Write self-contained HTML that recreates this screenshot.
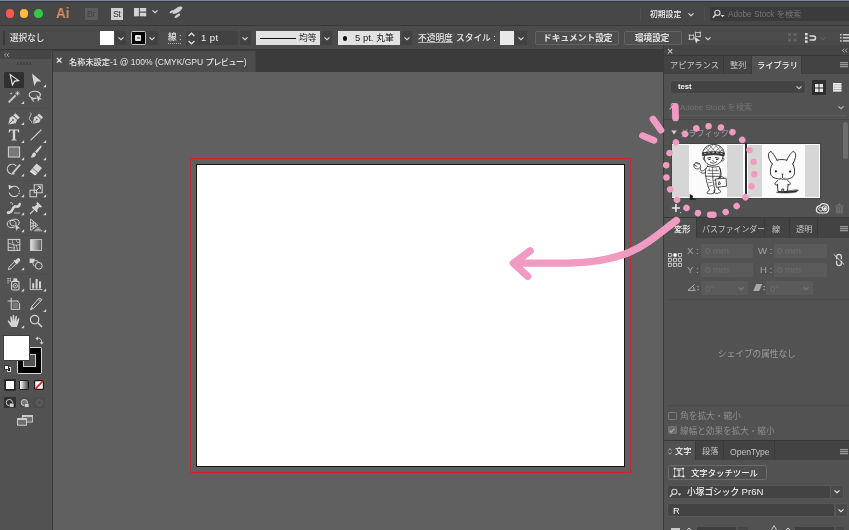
<!DOCTYPE html>
<html lang="ja"><head><meta charset="utf-8"><title>Illustrator</title>
<style>
*{box-sizing:border-box;margin:0;padding:0}
html,body{width:849px;height:530px;overflow:hidden;background:#606060}
body{position:relative;font-family:"Liberation Sans","Noto Sans CJK JP",sans-serif;font-size:8.4px;color:#e6e6e6;line-height:12px}
.a{position:absolute}
.t{position:absolute;white-space:nowrap;height:12px;line-height:12px;will-change:transform}
svg{position:absolute;overflow:visible}
#topstrip{left:0;top:0;width:849px;height:2.4px;background:linear-gradient(#8288aa 0,#7b80a0 1.2px,#353535 1.3px,#353535 2.4px)}
#appbar{left:0;top:1px;width:849px;height:25px;background:#474747}
#ctrl{left:0;top:24.6px;width:849px;height:25.4px;background:#4b4b4b;border-top:1.6px solid #393939}
#tabbar{left:51px;top:49.4px;width:613px;height:22.2px;background:#3b3b3b;border-top:1px solid #383838}
#doctab{left:52.4px;top:50.6px;width:203.2px;height:21px;background:#4c4c4c;border-right:1px solid #444}
#tools{left:0;top:49.4px;width:52.5px;height:481px;background:#525252;border-right:1.5px solid #3a3a3a;border-top:1px solid #383838}
#toolhead{left:0;top:50px;width:51px;height:9px;background:#454545}
#rp{left:663px;top:45px;width:186px;height:485px;background:#525252;border-left:1px solid #3a3a3a}
.dark{background:#3e3e3e}
.cbox{position:absolute;background:#424242;top:31.4px;height:13.2px}
.ptabs{position:absolute;left:664px;width:185px;background:#434343;border-top:1px solid #383838}
.ptab{position:absolute;top:0;height:100%;border-right:1px solid #3a3a3a}
.ptab.on{background:#525252}
.dim{color:#9a9a9a}
.fld{position:absolute;background:#5a5a5a;border-radius:1px}
</style></head><body>
<div class="a" id="appbar"></div>
<div class="a" id="topstrip"></div>
<div class="a" id="ctrl"></div>
<div class="a" id="tabbar"></div>
<div class="a" id="doctab"></div>

<!-- ===== application bar ===== -->
<div class="a" style="left:5.5px;top:9.4px;width:8.6px;height:8.6px;border-radius:50%;background:#fc5753"></div>
<div class="a" style="left:19.8px;top:9.4px;width:8.6px;height:8.6px;border-radius:50%;background:#fdbc40"></div>
<div class="a" style="left:34.4px;top:9.4px;width:8.6px;height:8.6px;border-radius:50%;background:#33c748"></div>
<div class="t" id="ai" style="left:55.6px;top:4.2px;font-size:14.4px;height:18px;line-height:18px;color:#d98e5f;font-weight:bold;transform:scaleX(0.93);transform-origin:0 0">Ai</div>
<div class="a" style="left:85px;top:8px;width:12.5px;height:12px;background:#5c5c5c"></div>
<div class="t" style="left:87px;top:8.2px;font-size:8.8px;color:#454545;letter-spacing:-0.4px">Br</div>
<div class="a" style="left:110.7px;top:8px;width:12.5px;height:12px;background:#cfcfcf"></div>
<div class="t" style="left:113.2px;top:8.2px;font-size:8.8px;color:#2c2c2c;letter-spacing:-0.5px">St</div>
<svg style="left:133.5px;top:7.7px" width="12.7" height="8.8" viewBox="0 0 13 9"><rect x="0" y="0" width="5" height="8.5" fill="#d4d4d4"/><rect x="6" y="0" width="6.5" height="3.6" fill="#d4d4d4"/><rect x="6" y="4.8" width="6.5" height="3.7" fill="#d4d4d4"/></svg>
<svg style="left:151.9px;top:10.4px" width="6" height="3.4" viewBox="0 0 7 4"><path d="M0.5 0.5 L3.5 3.2 L6.5 0.5" fill="none" stroke="#ddd" stroke-width="1.3"/></svg>
<svg style="left:0;top:0" width="200" height="26" viewBox="0 0 200 26"><g fill="#cfcfcf"><ellipse cx="177.4" cy="10.2" rx="5.8" ry="2.3" transform="rotate(-33 177.4 10.2)"/><ellipse cx="177.4" cy="15.8" rx="3.3" ry="1.25" transform="rotate(-35 177.4 15.8)"/><ellipse cx="171.6" cy="11.6" rx="2.4" ry="0.95" transform="rotate(-35 171.6 11.6)"/></g></svg>
<div class="a" style="left:640.3px;top:6.6px;width:1px;height:14px;background:#4f4f4f"></div>
<div class="t" id="shoki" style="left:650px;top:8.8px;font-size:7.8px;font-weight:500;color:#f0f0f0">初期設定</div>
<svg style="left:687.8px;top:12.6px" width="6" height="3.4" viewBox="0 0 7 4"><path d="M0.5 0.5 L3.5 3.2 L6.5 0.5" fill="none" stroke="#ddd" stroke-width="1.3"/></svg>
<div class="a" style="left:704.4px;top:6.6px;width:1px;height:14px;background:#4f4f4f"></div>
<div class="a" style="left:709.9px;top:7.2px;width:140px;height:13.5px;background:#3b3b3b;border-radius:2px 0 0 2px"></div>
<svg style="left:711.6px;top:8.8px" width="13" height="10" viewBox="0 0 13 10"><circle cx="5.4" cy="3.8" r="2.6" fill="none" stroke="#d4d4d4" stroke-width="1.15"/><path d="M3.5 5.8 L0.9 8.7" stroke="#d4d4d4" stroke-width="1.4"/><path d="M8.6 6 L12.6 6 L10.6 8.2Z" fill="#d4d4d4"/></svg>
<div class="t" id="stock1" style="left:728px;top:8.6px;font-size:8.2px;color:#757575">Adobe Stock を検索</div>

<!-- ===== control bar ===== -->
<div class="a" style="left:3px;top:31px;width:2px;height:14px;background:#3a3a3a"></div>
<div class="t" id="sentaku" style="left:9.8px;top:32px;font-size:8.6px;font-weight:500">選択なし</div>
<div class="a" style="left:100px;top:31px;width:14px;height:14px;background:#fff"></div>
<div class="cbox" style="left:115px;width:11px"></div>
<svg style="left:117.7px;top:36.6px" width="6" height="3.4" viewBox="0 0 7 4"><path d="M0.5 0.5 L3.5 3.2 L6.5 0.5" fill="none" stroke="#ddd" stroke-width="1.3"/></svg>
<div class="a" style="left:131px;top:31.2px;width:14.8px;height:13.8px;background:#000;border:1.2px solid #c4c4c4;border-radius:1.5px"></div>
<div class="a" style="left:135.3px;top:35.4px;width:6.2px;height:5.6px;background:#e6e6e6;border-radius:1px"></div>
<div class="a" style="left:137px;top:36.9px;width:2.8px;height:2.6px;background:#8a8a8a"></div>
<div class="cbox" style="left:146.4px;width:11.6px"></div>
<svg style="left:149.2px;top:36.6px" width="6" height="3.4" viewBox="0 0 7 4"><path d="M0.5 0.5 L3.5 3.2 L6.5 0.5" fill="none" stroke="#ddd" stroke-width="1.3"/></svg>
<div class="t" id="sen" style="left:168px;top:32.4px;font-size:8.7px;font-weight:500;border-bottom:1px dotted #aaa;height:12px;line-height:11px">線<span style="margin-left:2.2px">:</span></div>
<div class="cbox" style="left:185.8px;width:11.4px"></div>
<svg style="left:188px;top:32px" width="7" height="12" viewBox="0 0 7 12"><path d="M0.6 4 L3.5 1.2 L6.4 4 M0.6 9 L3.5 11.8 L6.4 9" fill="none" stroke="#ddd" stroke-width="1.3"/></svg>
<div class="cbox" style="left:198.4px;width:40px"></div>
<div class="t" id="pt1" style="left:201px;top:32.4px;font-size:9.6px;letter-spacing:0.35px;color:#f4f4f4">1 pt</div>
<div class="cbox" style="left:239.6px;width:11.2px"></div>
<svg style="left:241.5px;top:36.6px" width="6" height="3.4" viewBox="0 0 7 4"><path d="M0.5 0.5 L3.5 3.2 L6.5 0.5" fill="none" stroke="#ddd" stroke-width="1.3"/></svg>
<div class="a" style="left:256.2px;top:31.4px;width:63.8px;height:13.4px;background:#e2e2e2"></div>
<div class="a" style="left:260px;top:37.7px;width:36px;height:1.7px;background:#111"></div>
<div class="t" id="kinto" style="left:299.3px;top:32.4px;font-size:8.8px;color:#222">均等</div>
<div class="cbox" style="left:321.5px;width:10.5px"></div>
<svg style="left:324.0px;top:36.6px" width="6" height="3.4" viewBox="0 0 7 4"><path d="M0.5 0.5 L3.5 3.2 L6.5 0.5" fill="none" stroke="#ddd" stroke-width="1.3"/></svg>
<div class="a" style="left:338px;top:31.4px;width:61.5px;height:13.4px;background:#e2e2e2"></div>
<div class="a" style="left:342.8px;top:36.3px;width:4.4px;height:4.4px;border-radius:50%;background:#111"></div>
<div class="t" id="maru" style="left:355.2px;top:32.4px;font-size:8.8px;color:#222"><span style="font-size:9.5px">5 pt. </span>丸筆</div>
<div class="cbox" style="left:401.5px;width:10.5px"></div>
<svg style="left:404.0px;top:36.6px" width="6" height="3.4" viewBox="0 0 7 4"><path d="M0.5 0.5 L3.5 3.2 L6.5 0.5" fill="none" stroke="#ddd" stroke-width="1.3"/></svg>
<div class="t" id="futo" style="left:417.5px;top:32.6px;font-size:8.7px;font-weight:500;border-bottom:1px solid #a8a8a8;height:10.4px;line-height:11px">不透明度</div>
<div class="t" id="style" style="left:456px;top:32.4px;font-size:8.7px;font-weight:500">スタイル :</div>
<div class="a" style="left:500px;top:31px;width:13.5px;height:14px;background:#e9e9e9"></div>
<div class="cbox" style="left:514.5px;width:12px"></div>
<svg style="left:517.7px;top:36.6px" width="6" height="3.4" viewBox="0 0 7 4"><path d="M0.5 0.5 L3.5 3.2 L6.5 0.5" fill="none" stroke="#ddd" stroke-width="1.3"/></svg>
<div class="a" style="left:535px;top:30.5px;width:84px;height:14.5px;border:1px solid #636363;border-radius:2px;background:#4e4e4e"></div>
<div class="t" id="docset" style="left:543px;top:32px;font-size:8.7px;font-weight:bold">ドキュメント設定</div>
<div class="a" style="left:623.5px;top:30.5px;width:58.5px;height:14.5px;border:1px solid #636363;border-radius:2px;background:#4e4e4e"></div>
<div class="t" id="kankyo" style="left:634.8px;top:32px;font-size:8.6px;font-weight:bold">環境設定</div>
<svg style="left:688px;top:30px" width="16" height="16" viewBox="688 30 16 16"><g fill="none" stroke="#d0d0d0" stroke-width="0.8"><rect x="689.4" y="35.2" width="4" height="4"/><rect x="695.6" y="32.4" width="4.6" height="4"/></g><g fill="#d0d0d0"><rect x="688.7" y="34.5" width="1.4" height="1.4"/><rect x="692.7" y="34.5" width="1.4" height="1.4"/><rect x="688.7" y="38.5" width="1.4" height="1.4"/><rect x="694.9" y="31.7" width="1.4" height="1.4"/><rect x="699.5" y="31.7" width="1.4" height="1.4"/><rect x="699.5" y="35.7" width="1.4" height="1.4"/></g><path d="M693.6 36 L700.6 40.8 L697.4 41.2 L696.2 44Z" fill="#e4e4e4" stroke="#484848" stroke-width="0.4"/></svg>
<svg style="left:705.2px;top:36.6px" width="6" height="3.4" viewBox="0 0 7 4"><path d="M0.5 0.5 L3.5 3.2 L6.5 0.5" fill="none" stroke="#ddd" stroke-width="1.3"/></svg>
<svg style="left:788px;top:33px" width="9" height="10" viewBox="0 0 9 10"><g fill="#626262"><rect x="0" y="0" width="3" height="3"/><rect x="5.5" y="0" width="3" height="3"/><rect x="0" y="5.5" width="3" height="3"/><rect x="5.5" y="5.5" width="3" height="3"/></g></svg>
<svg style="left:804.5px;top:32.8px" width="12" height="10" viewBox="0 0 12 10"><g fill="#dcdcdc"><rect x="0" y="0" width="2.6" height="2.4"/><rect x="0" y="3.7" width="2.6" height="2.4"/><rect x="0" y="7.4" width="2.6" height="2.4"/></g><path d="M4.6 2.9 H8.4 A2.1 2.1 0 0 1 8.4 7.1 H4.6" fill="none" stroke="#dcdcdc" stroke-width="1.5"/></svg>
<svg style="left:820.2px;top:36.6px" width="6" height="3.4" viewBox="0 0 7 4"><path d="M0.5 0.5 L3.5 3.2 L6.5 0.5" fill="none" stroke="#6a6a6a" stroke-width="1.1"/></svg>
<svg style="left:840px;top:34px" width="9" height="7.6" viewBox="0 0 9 8.4" preserveAspectRatio="none"><g fill="#d0d0d0"><rect x="0" y="0" width="1.6" height="1.6"/><rect x="0" y="3.4" width="1.6" height="1.6"/><rect x="0" y="6.8" width="1.6" height="1.6"/><rect x="2.8" y="0" width="6.2" height="1.6"/><rect x="2.8" y="3.4" width="6.2" height="1.6"/><rect x="2.8" y="6.8" width="6.2" height="1.6"/></g></svg>

<!-- ===== document tab ===== -->
<div class="t" id="tabx" style="left:56.2px;top:54.2px;font-size:10.8px;color:#e8e8e8;font-weight:bold">×</div>
<div class="t" id="tabt" style="left:68.8px;top:55.5px;font-size:8.2px;font-weight:500">名称未設定<span style="font-size:8.5px;font-weight:400">-1 @ 100% (CMYK/GPU </span><span style="letter-spacing:-0.55px">プレビュー</span><span style="font-size:8.5px">)</span></div>

<!-- ===== canvas ===== -->
<div class="a" style="left:190px;top:158px;width:440.7px;height:314.8px;border:1.5px solid #cb2630"></div>
<div class="a" style="left:196px;top:164px;width:428.6px;height:302.6px;background:#fff;border:1.2px solid #161616"></div>

<!--TOOLS_START-->
<div class="a" id="tools"></div>
<div class="a" id="toolhead"></div>
<svg style="left:4.2px;top:52.6px" width="5.6" height="4" viewBox="0 0 7 5"><path d="M2.8 0.3 L0.6 2.5 L2.8 4.7 M6 0.3 L3.8 2.5 L6 4.7" fill="none" stroke="#ccc" stroke-width="0.9"/></svg>
<div class="a" style="left:17px;top:62px;width:15px;height:3px;background:repeating-linear-gradient(90deg,#424242 0 2px,#525252 2px 3px)"></div>
<div class="a" style="left:4px;top:107.8px;width:43px;height:1px;background:#4e4e4e"></div>
<div class="a" style="left:4px;top:180.3px;width:43px;height:1px;background:#4e4e4e"></div>
<div class="a" style="left:4px;top:234.6px;width:43px;height:1px;background:#4e4e4e"></div>
<div class="a" style="left:4px;top:273.5px;width:43px;height:1px;background:#4e4e4e"></div>
<div class="a" style="left:4px;top:293.7px;width:43px;height:1px;background:#4e4e4e"></div>
<div class="a" style="left:4px;top:71.5px;width:20px;height:16px;background:#2f2f2f;border-radius:1.5px"></div>
<svg style="left:5.800000000000001px;top:71.5px" width="16" height="16" viewBox="0 0 16 16"><path d="M4.2 2.6 L12.6 8.6 L8.6 9.1 L6.4 12.9Z" fill="none" stroke="#e8e8e8" stroke-width="1.1" stroke-linejoin="miter"/></svg>
<svg style="left:27.6px;top:71.5px" width="16" height="16" viewBox="0 0 16 16"><path d="M4 1.4 L13.4 9.4 L8.8 9.6 L6.2 14Z" fill="#d4d4d4"/><path d="M18.10 12.20 V15.20 H15.10Z" fill="#d6d6d6"/></svg>
<svg style="left:5.800000000000001px;top:89px" width="16" height="16" viewBox="0 0 16 16"><path d="M2.6 13.4 L9.6 6.4" stroke="#d4d4d4" stroke-width="1.7"/><path d="M11.5 2 V6.6 M9.2 4.3 H13.8 M9.9 2.7 L13.1 5.9 M13.1 2.7 L9.9 5.9" stroke="#d4d4d4" stroke-width="0.7"/><path d="M5.2 3.4 V5.6 M4.1 4.5 H6.3" stroke="#d4d4d4" stroke-width="0.6"/><path d="M18.10 12.10 V15.10 H15.10Z" fill="#d6d6d6"/></svg>
<svg style="left:27.6px;top:89px" width="16" height="16" viewBox="0 0 16 16"><ellipse cx="6.8" cy="5.8" rx="5.6" ry="3.6" fill="none" stroke="#d4d4d4" stroke-width="1.1"/><path d="M4.4 8.6 C2.6 9.6 3.6 11.4 5.2 11 C6.4 10.6 5.6 9 4.6 9.4 C4 10.2 4.8 12.4 6.2 13" fill="none" stroke="#d4d4d4" stroke-width="0.9"/><path d="M8.2 5.4 L14.6 10.4 L11.6 10.6 L10 13.4Z" fill="#d4d4d4" stroke="#525252" stroke-width="0.5"/></svg>
<svg style="left:5.800000000000001px;top:111px" width="16" height="16" viewBox="0 0 16 16"><path d="M9.4 2.2 L13.8 6.6 L11.8 8.6 L7.4 4.2Z" fill="#d4d4d4"/><path d="M6.9 4.9 L11.1 9.1 L9.6 12.2 L2.4 13.6 L3.8 6.4Z" fill="#d4d4d4"/><path d="M2.8 13.2 L6.6 9.4" stroke="#525252" stroke-width="0.8"/><circle cx="7" cy="9" r="0.9" fill="#525252"/><path d="M18.10 10.90 V13.90 H15.10Z" fill="#d6d6d6"/></svg>
<svg style="left:27.6px;top:111px" width="16" height="16" viewBox="0 0 16 16"><g transform="translate(2.6,0.4) scale(0.9)"><path d="M9.4 2.2 L13.8 6.6 L11.8 8.6 L7.4 4.2Z" fill="#d4d4d4"/><path d="M6.9 4.9 L11.1 9.1 L9.6 12.2 L2.4 13.6 L3.8 6.4Z" fill="#d4d4d4"/><path d="M2.8 13.2 L6.6 9.4" stroke="#525252" stroke-width="0.8"/><circle cx="7" cy="9" r="0.9" fill="#525252"/></g><path d="M2.4 1.6 C4.6 3 0.6 6.2 1.6 8.4 C2.4 10.2 4 9.4 3.6 11.6" fill="none" stroke="#d4d4d4" stroke-width="0.9"/></svg>
<svg style="left:5.800000000000001px;top:126.69999999999999px" width="16" height="16" viewBox="0 0 16 16"><path d="M2.8 2.4 H13.2 V5.4 H12.2 C12 4 11.6 3.6 10.4 3.6 H9.2 V12 C9.2 12.6 9.6 12.8 10.6 12.8 V13.6 H5.4 V12.8 C6.4 12.8 6.8 12.6 6.8 12 V3.6 H5.6 C4.4 3.6 4 4 3.8 5.4 H2.8Z" fill="#d4d4d4"/><path d="M18.10 12.90 V15.90 H15.10Z" fill="#d6d6d6"/></svg>
<svg style="left:27.6px;top:126.69999999999999px" width="16" height="16" viewBox="0 0 16 16"><path d="M2.6 13.4 L13.4 2.6" stroke="#d4d4d4" stroke-width="1.2"/><path d="M18.10 12.90 V15.90 H15.10Z" fill="#d6d6d6"/></svg>
<svg style="left:5.800000000000001px;top:143.8px" width="16" height="16" viewBox="0 0 16 16"><rect x="2.4" y="3" width="11.2" height="10" fill="#777" stroke="#d4d4d4" stroke-width="1"/><path d="M18.10 13.20 V16.20 H15.10Z" fill="#d6d6d6"/></svg>
<svg style="left:27.6px;top:143.8px" width="16" height="16" viewBox="0 0 16 16"><path d="M13.4 1.6 C14 2.2 13.6 3 13 3.8 L8.8 9.2 L7 7.6 L12 2.2 C12.6 1.6 13 1.2 13.4 1.6Z" fill="#d4d4d4"/><path d="M6.4 8.2 L8.2 9.9 C8 12 6 13.6 2.4 13.6 C4 12.4 3.6 9.2 6.4 8.2Z" fill="#d4d4d4"/><path d="M18.10 13.20 V16.20 H15.10Z" fill="#d6d6d6"/></svg>
<svg style="left:5.800000000000001px;top:161.4px" width="16" height="16" viewBox="0 0 16 16"><path d="M8.6 12.4 A4.9 4.9 0 1 1 10.2 5.2" fill="none" stroke="#d4d4d4" stroke-width="1.1"/><path d="M13.6 3 L14.8 4.2 L7.6 12.6 L5.6 13.4 L6.2 11.4Z" fill="#d4d4d4"/><path d="M18.10 12.50 V15.50 H15.10Z" fill="#d6d6d6"/></svg>
<svg style="left:27.6px;top:161.4px" width="16" height="16" viewBox="0 0 16 16"><path d="M8.6 2.6 L14 7 L8.4 13.4 L3 9Z" fill="#d4d4d4"/><path d="M3 9 L8.4 13.4 L7 14.6 L1.8 10.4Z" fill="#eee"/><path d="M4.6 7.4 L10 11.8" stroke="#525252" stroke-width="0.7"/><path d="M18.10 12.50 V15.50 H15.10Z" fill="#d6d6d6"/></svg>
<svg style="left:5.800000000000001px;top:183.3px" width="16" height="16" viewBox="0 0 16 16"><path d="M5.2 4.2 A5.2 5.2 0 1 1 3.2 9.6" fill="none" stroke="#d4d4d4" stroke-width="1.1" stroke-dasharray="9 1.2 1.2 1.2 1.2 1.2 20"/><path d="M2.6 1.8 L7 3.8 L3 6.4Z" fill="#d4d4d4"/><path d="M18.10 11.30 V14.30 H15.10Z" fill="#d6d6d6"/></svg>
<svg style="left:27.6px;top:183.3px" width="16" height="16" viewBox="0 0 16 16"><rect x="6.2" y="1.8" width="8" height="8" fill="none" stroke="#d4d4d4" stroke-width="1"/><rect x="2" y="7.2" width="6.6" height="6.6" fill="none" stroke="#d4d4d4" stroke-width="1"/><path d="M8.4 7.6 L12.2 3.8 M9.8 3.6 H12.4 V6.2" fill="none" stroke="#d4d4d4" stroke-width="1"/><path d="M18.10 11.30 V14.30 H15.10Z" fill="#d6d6d6"/></svg>
<svg style="left:5.800000000000001px;top:199.7px" width="16" height="16" viewBox="0 0 16 16"><path d="M2 12.6 C4 12.8 5.6 11.6 6.4 9.6 C7.2 7.4 8.6 6.2 10.4 6.6 C12.4 7 13.4 5.6 13.8 4" fill="none" stroke="#d4d4d4" stroke-width="2.6" stroke-linecap="round"/><path d="M4 3.2 C5.6 1.6 7.6 3.4 6 5 M3 14 L9 5" fill="none" stroke="#d4d4d4" stroke-width="0.9"/><path d="M8 13 L14 13" stroke="#d4d4d4" stroke-width="0.8"/><path d="M18.10 12.20 V15.20 H15.10Z" fill="#d6d6d6"/></svg>
<svg style="left:27.6px;top:199.7px" width="16" height="16" viewBox="0 0 16 16"><path d="M9.2 1.8 L14.2 6.8 L12.6 7.6 L11.4 7 L9.4 9.6 L9.6 11.6 L8.6 12.2 L3.8 7.4 L4.4 6.4 L6.4 6.6 L9 4.6 L8.4 3.4Z" fill="#d4d4d4"/><path d="M5.8 10.2 L2 14" stroke="#d4d4d4" stroke-width="1.1"/><path d="M18.10 12.20 V15.20 H15.10Z" fill="#d6d6d6"/></svg>
<svg style="left:5.800000000000001px;top:216.7px" width="16" height="16" viewBox="0 0 16 16"><ellipse cx="5.6" cy="7" rx="4.4" ry="3.6" fill="none" stroke="#d4d4d4" stroke-width="1"/><ellipse cx="8.6" cy="5.6" rx="4.6" ry="3.4" fill="none" stroke="#d4d4d4" stroke-width="1"/><path d="M8.6 6.6 L14.8 11.6 L11.8 11.8 L10.2 14.6Z" fill="#d4d4d4" stroke="#525252" stroke-width="0.5"/><path d="M18.10 12.20 V15.20 H15.10Z" fill="#d6d6d6"/></svg>
<svg style="left:27.6px;top:216.7px" width="16" height="16" viewBox="0 0 16 16"><path d="M2.6 2 V13.6 L9.8 8.2Z M2.6 5.8 L6.4 6.6 M2.6 9.6 L7.6 8.2 M5.2 3.9 V11.6 M7.6 5.8 V9.9" fill="none" stroke="#d4d4d4" stroke-width="0.9"/><path d="M8.6 11 H11.6 M7.4 12.4 H12.8 M6 13.8 H14.2" stroke="#d4d4d4" stroke-width="0.8"/><path d="M18.10 12.20 V15.20 H15.10Z" fill="#d6d6d6"/></svg>
<svg style="left:5.800000000000001px;top:236.6px" width="16" height="16" viewBox="0 0 16 16"><rect x="2.2" y="2.4" width="11.6" height="11" fill="none" stroke="#d4d4d4" stroke-width="1"/><path d="M2.2 7 C5 5.6 7 9.6 13.8 7.6 M6.6 2.4 C5.4 6 9.6 9 7.8 13.4 M2.2 10.6 C5 9.6 7 12 9 10.6 M10.6 2.4 C9.6 5 12 6.4 13.8 4.6 M10.4 8 C10 10 12 11.6 11 13.4" fill="none" stroke="#d4d4d4" stroke-width="0.8"/></svg>
<svg style="left:27.6px;top:236.6px" width="16" height="16" viewBox="0 0 16 16"><defs><linearGradient id="gr1" x1="0" x2="1" y1="0" y2="0"><stop offset="0" stop-color="#e6e6e6"/><stop offset="1" stop-color="#555"/></linearGradient></defs><rect x="2.4" y="2.6" width="11.2" height="10.8" fill="url(#gr1)" stroke="#cfcfcf" stroke-width="0.9"/></svg>
<svg style="left:5.800000000000001px;top:255.60000000000002px" width="16" height="16" viewBox="0 0 16 16"><path d="M2.4 13.6 L3 11.2 L8.6 5.6 L10.4 7.4 L4.8 13Z" fill="none" stroke="#d4d4d4" stroke-width="1"/><path d="M8 4.4 L11.6 8 M9.4 5.4 L11.6 3.2 C12.6 2.2 14.2 3.6 13.2 4.8 L10.8 7" stroke="#d4d4d4" stroke-width="1.5" fill="#d4d4d4"/><path d="M18.10 11.20 V14.20 H15.10Z" fill="#d6d6d6"/></svg>
<svg style="left:27.6px;top:255.60000000000002px" width="16" height="16" viewBox="0 0 16 16"><rect x="1.6" y="2.6" width="5" height="4.4" fill="#d4d4d4"/><circle cx="7.8" cy="7.4" r="2.9" fill="#525252" stroke="#d4d4d4" stroke-width="0.9"/><circle cx="10.8" cy="9.8" r="3.4" fill="#525252" stroke="#d4d4d4" stroke-width="1"/></svg>
<svg style="left:5.800000000000001px;top:275.5px" width="16" height="16" viewBox="0 0 16 16"><rect x="5.6" y="5.4" width="7.4" height="8.6" rx="1.2" fill="none" stroke="#d4d4d4" stroke-width="1.1"/><rect x="7.4" y="2.4" width="3.8" height="3" fill="#d4d4d4"/><circle cx="9.3" cy="9.8" r="2.2" fill="none" stroke="#d4d4d4" stroke-width="0.9"/><circle cx="9.3" cy="9.8" r="0.8" fill="#d4d4d4"/><path d="M1.4 2.6 h1.3 M3.6 2.6 h1.3 M1.4 4.8 h1.3 M3.6 4.8 h1.3 M1.4 7 h1.3" stroke="#d4d4d4" stroke-width="1.2"/><path d="M18.10 12.50 V15.50 H15.10Z" fill="#d6d6d6"/></svg>
<svg style="left:27.6px;top:275.5px" width="16" height="16" viewBox="0 0 16 16"><path d="M2.2 2 V13.6 H14.4" fill="none" stroke="#d4d4d4" stroke-width="0.9"/><rect x="4.2" y="7.2" width="2" height="5.4" fill="#d4d4d4"/><rect x="7.6" y="3" width="2" height="9.6" fill="#d4d4d4"/><rect x="11" y="5.4" width="2" height="7.2" fill="#d4d4d4"/><path d="M18.10 12.50 V15.50 H15.10Z" fill="#d6d6d6"/></svg>
<svg style="left:5.800000000000001px;top:296px" width="16" height="16" viewBox="0 0 16 16"><path d="M5.2 1.6 V5 M1.6 5 H12.4 M5.2 5 V13.4 H13.6 V7.4 L11.2 5" fill="none" stroke="#d4d4d4" stroke-width="1"/><rect x="6.4" y="6.4" width="6" height="6" fill="#777"/></svg>
<svg style="left:27.6px;top:296px" width="16" height="16" viewBox="0 0 16 16"><path d="M11.2 2 L14 3.6 L5.6 12.4 L2.6 13.8 L3.6 10.6Z" fill="none" stroke="#d4d4d4" stroke-width="1"/><path d="M10.2 3.4 L12.8 5.2" stroke="#d4d4d4" stroke-width="0.8"/><path d="M2.6 13.8 L5 11" stroke="#d4d4d4" stroke-width="0.8"/><path d="M18.10 12.90 V15.90 H15.10Z" fill="#d6d6d6"/></svg>
<svg style="left:5.800000000000001px;top:313px" width="16" height="16" viewBox="0 0 16 16"><path d="M5.4 14 C4 12 2.6 10.2 1.8 8.6 C1.4 7.6 2.6 7.2 3.4 8.2 L4.8 9.8 L4.2 4 C4.1 3 5.5 2.9 5.7 3.9 L6.5 8 L6.7 2.6 C6.7 1.6 8.2 1.6 8.2 2.6 L8.4 8 L9.6 3.2 C9.8 2.3 11.2 2.6 11 3.6 L10.4 8.6 L12 5.6 C12.4 4.8 13.6 5.3 13.3 6.2 C12.6 8.6 12.2 11.6 10.8 14Z" fill="#d4d4d4"/><path d="M18.10 12.20 V15.20 H15.10Z" fill="#d6d6d6"/></svg>
<svg style="left:27.6px;top:313px" width="16" height="16" viewBox="0 0 16 16"><circle cx="6.6" cy="6.6" r="4.2" fill="none" stroke="#d4d4d4" stroke-width="1.2"/><path d="M9.8 9.8 L14 14" stroke="#d4d4d4" stroke-width="1.6"/></svg>
<div class="a" style="left:16.6px;top:347.4px;width:25.4px;height:26.6px;background:#000;border:1.1px solid #d8d8d8;border-radius:1.2px"></div>
<div class="a" style="left:23px;top:354px;width:12.5px;height:13px;background:#525252;border:1px solid #d0d0d0"></div>
<div class="a" style="left:3.6px;top:335.6px;width:25.4px;height:24.8px;background:#fff;box-shadow:0 0 0 1px #3e3e3e"></div>
<svg style="left:35px;top:336px" width="9" height="9" viewBox="0 0 9 9"><path d="M2 2.2 C5 1.6 6.8 3.4 6.6 6.4" fill="none" stroke="#d4d4d4" stroke-width="1"/><path d="M0.4 2.4 L2.8 0.4 V4.4Z M6.6 8.6 L4.6 6.2 H8.6Z" fill="#d4d4d4"/></svg>
<div class="a" style="left:6.6px;top:367.4px;width:4.6px;height:4.6px;background:#111;border:0.8px solid #d8d8d8"></div>
<div class="a" style="left:4.4px;top:365.2px;width:4.6px;height:4.6px;background:#fff;border:0.6px solid #333"></div>
<div class="a" style="left:4.2px;top:379.2px;width:11.8px;height:12px;background:#2f2f2f;border-radius:1px"></div>
<div class="a" style="left:5.4px;top:380.4px;width:9.4px;height:9.6px;background:#fff;border:1px solid #222"></div>
<div class="a" style="left:19.2px;top:380.2px;width:9.8px;height:10px;background:linear-gradient(90deg,#fafafa,#4a4a4a);border:1.2px solid #1c1c1c;border-radius:1.5px"></div>
<svg style="left:33.7px;top:380.2px" width="10" height="10" viewBox="0 0 10 10"><rect x="0.6" y="0.6" width="8.8" height="8.8" rx="1" fill="#fff" stroke="#1c1c1c" stroke-width="1.2"/><path d="M1.4 8.8 L8.8 1.2" stroke="#f01818" stroke-width="1.7"/></svg>
<div class="a" style="left:4.2px;top:397.3px;width:11.9px;height:11px;background:#2f2f2f;border-radius:1px"></div>
<div class="a" style="left:18.7px;top:397.3px;width:11.9px;height:11px;background:#4c4c4c;border-radius:1px"></div>
<div class="a" style="left:33.2px;top:397.3px;width:12.3px;height:11px;background:#4e4e4e;border-radius:1px"></div>
<svg style="left:5.4px;top:398.2px" width="10.4" height="10.4" viewBox="0 0 10 10"><circle cx="4.2" cy="4.4" r="3" fill="none" stroke="#d4d4d4" stroke-width="0.9"/><rect x="4.2" y="5" width="4.4" height="3.8" fill="#d4d4d4" stroke="#2f2f2f" stroke-width="0.5"/></svg>
<svg style="left:20px;top:398.2px" width="10.4" height="10.4" viewBox="0 0 10 10"><circle cx="4.2" cy="4.4" r="3" fill="#777" stroke="#d4d4d4" stroke-width="0.9"/><rect x="4.6" y="5.2" width="4" height="3.6" fill="#d4d4d4" stroke="#525252" stroke-width="0.5"/></svg>
<svg style="left:34.6px;top:398px" width="10" height="10" viewBox="0 0 10 10"><circle cx="4.4" cy="4.6" r="2.8" fill="none" stroke="#636363" stroke-width="1.2"/></svg>
<svg style="left:17px;top:415.4px" width="16" height="11" viewBox="0 0 16 11"><rect x="5.4" y="0.5" width="10" height="6.6" fill="#6e6e6e" stroke="#d4d4d4" stroke-width="0.9"/><path d="M5.4 1.2 H15.4" stroke="#d4d4d4" stroke-width="1.3"/><rect x="0.5" y="3.6" width="9" height="6.6" fill="#6e6e6e" stroke="#d4d4d4" stroke-width="0.9"/><path d="M0.5 4.3 H9.5" stroke="#d4d4d4" stroke-width="1.3"/></svg>
<!--TOOLS_END-->
<!--RP_START-->
<div class="a" id="rp"></div>
<div class="a" style="left:664px;top:45px;width:185px;height:10.5px;background:#454545"></div>
<div class="t" id="px" style="left:666.5px;top:44.5px;font-size:10.6px;color:#e0e0e0">×</div>
<svg style="left:842px;top:48px" width="6" height="5" viewBox="0 0 7 5"><path d="M2.8 0.3 L0.6 2.5 L2.8 4.7 M6 0.3 L3.8 2.5 L6 4.7" fill="none" stroke="#ccc" stroke-width="0.9"/></svg>
<div class="ptabs" style="top:55px;height:19px"><div class="ptab" style="left:0;width:59.5px"></div><div class="ptab" style="left:59.5px;width:28.5px"></div><div class="ptab on" style="left:88px;width:50px"></div></div>
<div class="t dim" id="tb_ap" style="left:670.2px;top:59.5px;font-size:8.2px;color:#c4c4c4">アピアランス</div>
<div class="t" id="tb_se" style="left:729.5px;top:59.5px;font-size:8.2px;color:#c4c4c4">整列</div>
<div class="t" id="tb_li" style="left:757.2px;top:59.5px;font-size:8.2px;color:#f2f2f2;font-weight:500">ライブラリ</div>
<svg style="left:839.5px;top:62px" width="8" height="6" viewBox="0 0 8 6"><path d="M0 0.6 H8 M0 2.6 H8 M0 4.6 H8" stroke="#9a9a9a" stroke-width="1.1"/></svg>
<div class="a" style="left:670.6px;top:80.7px;width:134.4px;height:12.1px;background:#444;border-radius:2px;box-shadow:0 0 0 0.6px #595959"></div>
<div class="t" id="test" style="left:677.6px;top:81.4px;font-size:7.7px;color:#f4f4f4;font-weight:bold">test</div>
<svg style="left:795.5px;top:85.5px" width="6" height="3.4" viewBox="0 0 7 4"><path d="M0.5 0.5 L3.5 3.2 L6.5 0.5" fill="none" stroke="#ccc" stroke-width="1.4"/></svg>
<div class="a" style="left:812px;top:80px;width:14px;height:14.5px;background:#2e2e2e;border-radius:1px"></div>
<svg style="left:815px;top:83.5px" width="8" height="8" viewBox="0 0 8 8"><g fill="#e8e8e8"><rect x="0" y="0" width="3.5" height="3.5"/><rect x="4.5" y="0" width="3.5" height="3.5"/><rect x="0" y="4.5" width="3.5" height="3.5"/><rect x="4.5" y="4.5" width="3.5" height="3.5"/></g></svg>
<svg style="left:833px;top:83px" width="8.4" height="8.4" viewBox="0 0 8 8"><rect x="0" y="0" width="8" height="8" fill="#b4b4b4"/><path d="M0 0.7 H8 M0 2.9 H8 M0 5.1 H8 M0 7.3 H8" stroke="#ececec" stroke-width="1.4"/></svg>
<svg style="left:668.5px;top:102px" width="10" height="9" viewBox="0 0 12 10"><circle cx="5.2" cy="3.8" r="2.7" fill="none" stroke="#bbb" stroke-width="1.1"/><path d="M3.2 5.8 L0.8 8.6" stroke="#bbb" stroke-width="1.3"/></svg>
<div class="t" id="stock2" style="left:680.4px;top:102px;font-size:8.05px;color:#747474">Adobe Stock を検索</div>
<svg style="left:837.5px;top:105.5px" width="6" height="3.4" viewBox="0 0 7 4"><path d="M0.5 0.5 L3.5 3.2 L6.5 0.5" fill="none" stroke="#bbb" stroke-width="1.4"/></svg>
<div class="a" style="left:670px;top:114.8px;width:176px;height:1px;background:#5d5d5d"></div>
<div class="a" style="left:664px;top:118.6px;width:185px;height:1.6px;background:#474747"></div>
<div class="a" style="left:842.6px;top:122.2px;width:5.4px;height:37px;border-radius:2.7px;background:#6e6e6e"></div>
<svg style="left:670.8px;top:129.8px" width="6" height="5" viewBox="0 0 6 5"><path d="M0.2 0.4 H5.8 L3 4.6Z" fill="#cfcfcf"/></svg>
<div class="t" id="graphic" style="left:679.6px;top:127.5px;font-size:8.2px;color:#9c9c9c">グラフィック</div>
<div class="a" style="left:671px;top:143.2px;width:150px;height:55.6px;background:#454545"></div>
<div class="a" style="left:672px;top:144px;width:72.5px;height:54px;background:#fbfbfb"></div>
<div class="a" style="left:672.4px;top:144.8px;width:16.6px;height:52px;background:#d6d6d6"></div>
<div class="a" style="left:727px;top:144.8px;width:15.8px;height:52px;background:#d6d6d6"></div>
<div class="a" style="left:744.5px;top:143.2px;width:2px;height:55.6px;background:#2a2a2a"></div>
<div class="a" style="left:746.5px;top:144px;width:73.5px;height:54px;background:#fbfbfb"></div>
<div class="a" style="left:748.4px;top:144.8px;width:13.4px;height:52px;background:#d6d6d6"></div>
<div class="a" style="left:804.7px;top:144.8px;width:14.6px;height:52px;background:#d6d6d6"></div>
<svg style="left:688px;top:142px" width="42" height="58" viewBox="0 0 384 530"><g fill="none" stroke="#1e1e1e" stroke-width="7" stroke-linecap="round" stroke-linejoin="round">
<path d="M136 102 C134 60 175 24 235 22 C295 24 332 60 330 104" fill="#fff"/>
<path d="M150 70 L190 40 M170 90 L225 30 M205 92 L262 32 M240 94 L295 46 M275 96 L318 70 M160 50 L200 88 M200 32 L250 90 M250 28 L300 90 M290 44 L322 88" stroke-width="5" stroke="#444"/>
<path d="M134 98 C195 86 270 86 332 100 L330 128 C270 112 195 112 136 126Z" fill="#3a3a3a"/>
<path d="M150 106 L165 104 M185 100 L200 99 M222 97 L238 97 M260 98 L276 100 M298 103 L314 107" stroke="#eee" stroke-width="6"/>
<path d="M150 128 C146 165 160 198 196 210 C225 220 262 214 290 190 C310 172 320 150 320 128"/>
<path d="M148 140 C134 138 134 168 154 168 M320 146 C336 146 332 176 312 174"/>
<path d="M180 146 L206 142 M252 142 L282 148" stroke-width="8"/>
<path d="M190 160 L204 158 M258 158 L274 160" stroke-width="9"/>
<path d="M205 185 C222 198 246 196 262 180 M226 168 L232 176" stroke-width="7"/>
<path d="M178 222 C160 232 158 262 160 312 L292 314 C298 280 300 246 282 222 C250 232 210 232 178 222Z" fill="#fff"/>
<path d="M225 232 V312 M180 262 H280 M182 288 H284 M196 244 V262 M258 244 V262" stroke-width="5"/>
<path d="M166 240 C150 262 132 270 118 262 C112 254 112 244 116 236 M160 280 C140 292 120 286 110 272"/>
<path d="M56 206 C48 222 56 242 78 246 C100 250 116 236 114 216 C110 196 92 186 74 190 C64 192 58 198 56 206Z M74 190 C80 200 92 204 104 198 M62 214 L80 222" fill="#fff"/>
<path d="M290 240 C304 262 306 290 298 322"/>
<path d="M162 312 C168 360 182 400 196 440 M226 314 C228 360 236 400 246 436 M292 314 C290 350 284 390 276 430"/>
<path d="M180 340 L200 346 M188 372 L214 370 M196 404 L222 398 M240 350 L262 344 M244 384 L268 380" stroke-width="5"/>
<path d="M196 440 L172 462 C172 476 210 478 238 466 L240 440 M246 436 L240 462 C252 476 290 470 302 452 L276 430" fill="#fff"/>
<path d="M256 338 L348 330 L352 404 L262 414Z" fill="#fff"/>
<path d="M276 336 C276 312 326 308 328 332 M286 364 L298 384 L280 390Z"/>
</g><path d="M16 476 L48 494 L40 508 L82 528 H16Z" fill="#1e1e1e"/></svg>
<svg style="left:760px;top:142px" width="46" height="58" viewBox="0 0 420 530"><g fill="none" stroke="#1a1a1a" stroke-width="8" stroke-linecap="round" stroke-linejoin="round">
<path d="M155 166 C135 130 118 98 100 86 C84 88 72 112 78 136 C82 158 96 182 112 200"/>
<path d="M245 166 C262 130 284 94 304 86 C324 92 330 116 324 140 C318 164 308 184 300 200"/>
<path d="M155 166 C185 158 215 158 245 166"/>
<path d="M112 200 C96 228 90 262 98 296 C106 322 140 338 186 338"/>
<path d="M300 200 C316 230 320 264 312 298 C302 326 268 342 224 340"/>
<path d="M205 300 V328 M190 330 C190 348 220 348 220 330" stroke-width="7"/>
<path d="M162 354 C146 362 134 376 138 388 C142 396 154 396 160 388"/>
<path d="M254 354 C270 362 280 376 274 388 C270 396 260 396 256 388"/>
<path d="M160 388 C160 410 162 430 164 452 L200 454 L200 430 L216 430 L216 454 L252 450 C252 430 254 410 256 388"/>
</g><circle cx="145" cy="268" r="10" fill="#111"/><circle cx="275" cy="270" r="10" fill="#111"/><path d="M194 290 L216 290 L205 302Z" fill="#111"/>
<path d="M150 460 C210 448 290 452 352 440 L330 458 C270 468 200 468 150 460Z M250 448 L340 434" fill="#2a2a2a" stroke="#2a2a2a" stroke-width="5"/></svg>
<svg style="left:672.2px;top:203.8px" width="9.6" height="9.6" viewBox="0 0 9 9"><path d="M3.7 0 V7.6 M-0.1 3.8 H7.5" stroke="#ececec" stroke-width="1.45"/><rect x="7.6" y="7.6" width="1" height="1" fill="#ddd"/></svg>
<svg style="left:815px;top:202px" width="15" height="13" viewBox="815 202 15 13"><g fill="none" stroke="#e8e8e8"><path d="M819.6 213 C817.4 213 816.2 211.2 816.4 209.2 C816.6 207.2 818 205.8 819.8 205.6 C820.8 204 822.4 203.4 824 203.6 C826.8 204 828.8 206.2 828.8 208.8 C828.8 211.4 826.8 213.2 824.4 213Z" stroke-width="1.2"/><path d="M822.2 210.6 C821 211.4 819 210.8 818.8 209.2 C818.6 207.8 820 206.8 821.4 207.4 L823.6 209.6" stroke-width="1"/><circle cx="824.6" cy="208.4" r="2.5" stroke-width="1"/></g><circle cx="824.8" cy="208.6" r="1.3" fill="#fff"/></svg>
<svg style="left:835px;top:202.6px" width="9" height="11" viewBox="0 0 9 11"><path d="M0.2 2.9 H8.8 M2.8 2.6 L4.5 0.8 L6.2 2.6" fill="none" stroke="#6e6e6e" stroke-width="1.1"/><path d="M0.9 4 H8.1 L7.7 10.6 H1.3Z" fill="#6e6e6e"/><path d="M3.2 4.4 V10.2 M5.8 4.4 V10.2" stroke="#555" stroke-width="0.6"/></svg>
<div class="ptabs" style="top:217.2px;height:21px;border-top:1.6px solid #3a3a3a"><div class="ptab on" style="left:0;width:32.5px"></div><div class="ptab" style="left:32.5px;width:68.5px"></div><div class="ptab" style="left:101px;width:24.5px"></div><div class="ptab" style="left:125.5px;width:28px"></div></div>
<div class="t" id="tb_hen" style="left:674.2px;top:223.8px;font-size:8.2px;color:#f2f2f2;font-weight:500">変形</div>
<div class="t" id="tb_path" style="left:702px;top:223.8px;font-size:7.9px;color:#c4c4c4">パスファインダー</div>
<div class="t" id="tb_sen" style="left:772px;top:223.8px;font-size:8.2px;color:#c4c4c4">線</div>
<div class="t" id="tb_tou" style="left:795.5px;top:223.8px;font-size:8.2px;color:#c4c4c4">透明</div>
<svg style="left:839.5px;top:226px" width="8" height="6" viewBox="0 0 8 6"><path d="M0 0.6 H8 M0 2.6 H8 M0 4.6 H8" stroke="#9a9a9a" stroke-width="1.1"/></svg>
<div class="fld" style="left:701.1px;top:244.2px;width:51.8px;height:13.5px"></div>
<div class="fld" style="left:774px;top:244.2px;width:53px;height:13.5px"></div>
<div class="fld" style="left:701.1px;top:263px;width:51.8px;height:13.5px"></div>
<div class="fld" style="left:774px;top:263px;width:53px;height:13.5px"></div>
<div class="fld" style="left:701.1px;top:280.8px;width:47.1px;height:14px"></div>
<div class="fld" style="left:766.4px;top:280.8px;width:47px;height:14px"></div>
<div class="t" id="lx" style="left:687px;top:245.4px;color:#a4a4a4;font-size:9.6px">X :</div>
<div class="t" id="ly" style="left:687px;top:264px;color:#a4a4a4;font-size:9.6px">Y :</div>
<div class="t" id="lw" style="left:757.5px;top:245.4px;color:#a4a4a4;font-size:9.6px">W :</div>
<div class="t" id="lh" style="left:759.5px;top:264px;color:#a4a4a4;font-size:9.6px">H :</div>
<div class="t" style="left:704.5px;top:245.2px;color:#6e6e6e;font-size:9.6px">0 mm</div>
<div class="t" style="left:704.5px;top:264px;color:#6e6e6e;font-size:9.6px">0 mm</div>
<div class="t" style="left:777px;top:245.2px;color:#6e6e6e;font-size:9.6px">0 mm</div>
<div class="t" style="left:777px;top:264px;color:#6e6e6e;font-size:9.6px">0 mm</div>
<div class="t" style="left:704.5px;top:282.5px;color:#6e6e6e;font-size:9.6px">0°</div>
<div class="t" style="left:769.5px;top:282.5px;color:#6e6e6e;font-size:9.6px">0°</div>
<svg style="left:737.5px;top:286.5px" width="6" height="3.4" viewBox="0 0 7 4"><path d="M0.5 0.5 L3.5 3.2 L6.5 0.5" fill="none" stroke="#7a7a7a" stroke-width="1.4"/></svg>
<svg style="left:802.5px;top:286.5px" width="6" height="3.4" viewBox="0 0 7 4"><path d="M0.5 0.5 L3.5 3.2 L6.5 0.5" fill="none" stroke="#7a7a7a" stroke-width="1.4"/></svg>
<svg style="left:687px;top:283px" width="13" height="9" viewBox="0 0 13 9"><path d="M1 7.4 L7.6 1.4 M1 7.4 H8.6 M5.6 3.4 C6.8 4.4 7.2 5.8 7 7.4" fill="none" stroke="#b0b0b0" stroke-width="1"/><rect x="10.4" y="3" width="1.2" height="1.2" fill="#a4a4a4"/><rect x="10.4" y="6" width="1.2" height="1.2" fill="#a4a4a4"/></svg>
<svg style="left:752.5px;top:283px" width="13" height="9" viewBox="0 0 13 9"><path d="M3.2 1 H9.2 L6.2 8 H0.2Z" fill="#a8a8a8"/><rect x="10.6" y="3" width="1.2" height="1.2" fill="#a4a4a4"/><rect x="10.6" y="6" width="1.2" height="1.2" fill="#a4a4a4"/></svg>
<svg style="left:667.5px;top:253px" width="14" height="14" viewBox="0 0 14 14"><path d="M2 2 H12 V12 H2Z M7 2 V12 M2 7 H12" fill="none" stroke="#bbb" stroke-width="0.5"/><rect x="0.5" y="0.5" width="3" height="3" fill="#525252" stroke="#ddd" stroke-width="0.7"/><rect x="0.5" y="5.5" width="3" height="3" fill="#525252" stroke="#ddd" stroke-width="0.7"/><rect x="0.5" y="10.5" width="3" height="3" fill="#525252" stroke="#ddd" stroke-width="0.7"/><rect x="5.4" y="0.3999999999999999" width="3.2" height="3.2" fill="#fff"/><rect x="5.5" y="5.5" width="3" height="3" fill="#525252" stroke="#ddd" stroke-width="0.7"/><rect x="5.5" y="10.5" width="3" height="3" fill="#525252" stroke="#ddd" stroke-width="0.7"/><rect x="10.5" y="0.5" width="3" height="3" fill="#525252" stroke="#ddd" stroke-width="0.7"/><rect x="10.5" y="5.5" width="3" height="3" fill="#525252" stroke="#ddd" stroke-width="0.7"/><rect x="10.5" y="10.5" width="3" height="3" fill="#525252" stroke="#ddd" stroke-width="0.7"/></svg>
<svg style="left:833px;top:253px" width="12" height="14" viewBox="833 253 12 14"><g fill="none" stroke="#dcdcdc" stroke-width="1.2"><path d="M836.6 259.2 V256.8 a2.4 2.4 0 0 1 4.8 0 V259.2"/><path d="M836.6 260.8 V263.2 a2.4 2.4 0 0 0 4.8 0 V260.8"/><path d="M833.8 254.4 L844.2 264.6" stroke-width="1"/></g></svg>
<div class="a" style="left:668px;top:299.3px;width:181px;height:1px;background:#4a4a4a"></div>
<div class="t" id="shape" style="left:718.2px;top:347.5px;font-size:8.65px;color:#9c9c9c">シェイプの属性なし</div>
<div class="a" style="left:668px;top:405px;width:181px;height:1px;background:#4b4b4b"></div>
<div class="a" style="left:668px;top:411.5px;width:8.6px;height:8.4px;border:1px solid #747474;border-radius:1px"></div>
<div class="a" style="left:668px;top:426px;width:8.6px;height:8.4px;border:1px solid #747474;border-radius:1px;background:#6c6c6c"></div>
<svg style="left:669.4px;top:427.6px" width="6" height="5" viewBox="0 0 6 5"><path d="M0.6 2.6 L2.2 4.2 L5.4 0.6" fill="none" stroke="#a2a2a2" stroke-width="1.35"/></svg>
<div class="t" id="cb1" style="left:680.3px;top:410px;font-size:8.7px;color:#8e8e8e">角を拡大・縮小</div>
<div class="t" id="cb2" style="left:680.3px;top:424.5px;font-size:8.6px;color:#8e8e8e">線幅と効果を拡大・縮小</div>
<div class="ptabs" style="top:440px;height:20px"><div class="ptab on" style="left:0;width:32px"></div><div class="ptab" style="left:32px;width:27.5px"></div><div class="ptab" style="left:59.5px;width:51.5px"></div></div>
<svg style="left:667.5px;top:447.5px" width="4" height="7" viewBox="0 0 4 7"><path d="M0.3 2.6 L2 0.6 L3.7 2.6 M0.3 4.4 L2 6.4 L3.7 4.4" fill="none" stroke="#ccc" stroke-width="0.7"/></svg>
<div class="t" id="tb_moji" style="left:674.5px;top:446px;font-size:8.2px;color:#f2f2f2;font-weight:500">文字</div>
<div class="t" id="tb_dan" style="left:702.3px;top:446px;font-size:8.2px;color:#c4c4c4">段落</div>
<div class="t" id="tb_ot" style="left:729.5px;top:445.8px;font-size:8.6px;color:#c4c4c4">OpenType</div>
<svg style="left:839.5px;top:448.5px" width="8" height="6" viewBox="0 0 8 6"><path d="M0 0.6 H8 M0 2.6 H8 M0 4.6 H8" stroke="#9a9a9a" stroke-width="1.1"/></svg>
<div class="a" style="left:667.8px;top:464.8px;width:98.8px;height:15.7px;border:1px solid #6a6a6a;border-radius:2.5px;background:#4e4e4e"></div>
<svg style="left:673px;top:467px" width="12" height="11" viewBox="0 0 12 11"><path d="M1.6 1.6 H10 L10.4 9.4 H1.4Z" fill="none" stroke="#ddd" stroke-width="0.7"/><path d="M3.6 3 H8.4 M6 3 V8.2 M4.8 8.2 H7.2" stroke="#eee" stroke-width="1.1" fill="none"/><g fill="#eee"><circle cx="1.6" cy="1.6" r="1.1"/><circle cx="10" cy="1.6" r="1.1"/><circle cx="10.4" cy="9.4" r="1.1"/><circle cx="1.4" cy="9.4" r="1.1"/></g></svg>
<div class="t" id="touch" style="left:690.5px;top:466.5px;font-size:8.4px;color:#f0f0f0;font-weight:500">文字タッチツール</div>
<div class="a" style="left:668px;top:485.6px;width:162px;height:12.4px;background:#434343;border-radius:2px 0 0 2px;box-shadow:0 0 0 0.6px #5c5c5c"></div>
<div class="a" style="left:831.4px;top:485.6px;width:11.8px;height:12.4px;background:#4a4a4a;border-radius:0 2px 2px 0;box-shadow:0 0 0 0.6px #5c5c5c"></div>
<svg style="left:669px;top:487.8px" width="13" height="10" viewBox="0 0 13 10"><circle cx="5.4" cy="3.8" r="2.6" fill="none" stroke="#d4d4d4" stroke-width="1.1"/><path d="M3.5 5.8 L0.9 8.7" stroke="#d4d4d4" stroke-width="1.35"/><path d="M8.6 5.6 L12.4 5.6 L10.5 7.7Z" fill="#d4d4d4"/></svg>
<div class="t" id="kozuka" style="left:686.5px;top:486px;font-size:8.7px;color:#f0f0f0;font-weight:500">小塚ゴシック <span style="font-size:9.6px;font-weight:400">Pr6N</span></div>
<svg style="left:834.3px;top:490.2px" width="6" height="3.4" viewBox="0 0 7 4"><path d="M0.5 0.5 L3.5 3.2 L6.5 0.5" fill="none" stroke="#e4e4e4" stroke-width="1.4"/></svg>
<div class="a" style="left:668px;top:503.9px;width:166px;height:12.6px;background:#434343;border-radius:2px 0 0 2px;box-shadow:0 0 0 0.6px #5c5c5c"></div>
<div class="a" style="left:835.8px;top:503.9px;width:11px;height:12.6px;background:#4a4a4a;box-shadow:0 0 0 0.6px #5c5c5c"></div>
<div class="t" id="rr" style="left:672.5px;top:504.6px;font-size:9.2px;color:#fff">R</div>
<svg style="left:838.2px;top:508.5px" width="6" height="3.4" viewBox="0 0 7 4"><path d="M0.5 0.5 L3.5 3.2 L6.5 0.5" fill="none" stroke="#e4e4e4" stroke-width="1.4"/></svg>
<div class="a" style="left:671.3px;top:528px;width:8.6px;height:3px;background:#c8c8c8"></div>
<svg style="left:686px;top:526.6px" width="6" height="4" viewBox="0 0 6 4"><path d="M0.5 3.6 L3 1 L5.5 3.6" fill="none" stroke="#ddd" stroke-width="1"/></svg>
<div class="a" style="left:697px;top:527.3px;width:39px;height:4px;background:#3e3e3e"></div>
<div class="a" style="left:737.7px;top:527.3px;width:10.8px;height:4px;background:#474747"></div>
<svg style="left:770.5px;top:525.4px" width="6" height="5" viewBox="0 0 6 5"><path d="M0.4 5 L3 0.6 L5.6 5" fill="none" stroke="#c8c8c8" stroke-width="1"/></svg>
<svg style="left:784.6px;top:526.6px" width="6" height="4" viewBox="0 0 6 4"><path d="M0.5 3.6 L3 1 L5.5 3.6" fill="none" stroke="#ddd" stroke-width="1"/></svg>
<div class="a" style="left:795px;top:527.3px;width:38.5px;height:4px;background:#3e3e3e"></div>
<div class="a" style="left:835.7px;top:527.3px;width:8.3px;height:4px;background:#474747"></div>
<!--RP_END-->
<!--PK_START-->
<svg style="left:0;top:0" width="849" height="530" viewBox="0 0 849 530"><g fill="none" stroke="#f19bc3" stroke-linecap="round" stroke-linejoin="round">
<circle cx="710.2" cy="170.5" r="44.3" stroke-width="6.5" stroke-dasharray="0.01 12.47" transform="rotate(90 710.2 170.5)"/>
<path d="M675.3 106.4 L675.5 118" stroke-width="6.7"/>
<path d="M653 119 L660.9 130.1" stroke-width="6.7"/>
<path d="M642.5 135.6 L654 140.3" stroke-width="6.7"/>
<path d="M676.4 220.5 C660.5 232.6 645.1 246.5 626.4 253.5 C609.6 259.8 588.7 262.5 570.7 263 L514 263.2" stroke-width="7.3"/>
<path d="M530.2 250.8 L513.4 263.2 L527.8 276.4" stroke-width="7.3"/>
</g></svg>
<!--PK_END-->
</body></html>
